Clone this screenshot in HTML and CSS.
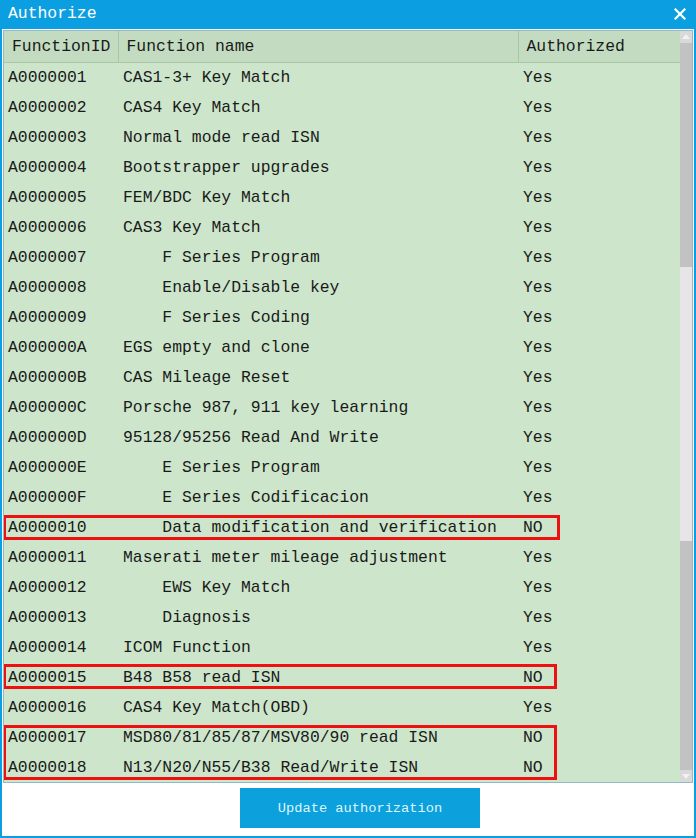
FILE: index.html
```html
<!DOCTYPE html>
<html lang="en">
<head>
  <meta charset="UTF-8" />
  <meta name="viewport" content="width=device-width, initial-scale=1.0"/>
  <title>Authorize</title>
  <link rel="stylesheet" href="styles.css">
</head>
<body>

  <div class="dialog">

    <!-- Title bar -->
    <div class="titlebar">
      <span class="title">Authorize</span>
      <svg class="close" width="12" height="12" viewBox="0 0 12 12">
        <path d="M1.5 1.5 L10.5 10.5 M10.5 1.5 L1.5 10.5" stroke="#fff" stroke-width="2.2" stroke-linecap="square"/>
      </svg>
    </div>

    <div class="content">

      <!-- Function list -->
      <div class="listbox">
        <div class="grid-wrap">
          <table class="func-table">
            <colgroup>
              <col class="col-id">
              <col class="col-name">
              <col class="col-auth">
            </colgroup>
            <thead>
              <tr>
                <th>FunctionID</th>
                <th>Function name</th>
                <th>Authorized</th>
              </tr>
            </thead>
            <tbody>
              <tr><td>A0000001</td><td>CAS1-3+ Key Match</td><td>Yes</td></tr>
              <tr><td>A0000002</td><td>CAS4 Key Match</td><td>Yes</td></tr>
              <tr><td>A0000003</td><td>Normal mode read ISN</td><td>Yes</td></tr>
              <tr><td>A0000004</td><td>Bootstrapper upgrades</td><td>Yes</td></tr>
              <tr><td>A0000005</td><td>FEM/BDC Key Match</td><td>Yes</td></tr>
              <tr><td>A0000006</td><td>CAS3 Key Match</td><td>Yes</td></tr>
              <tr><td>A0000007</td><td>    F Series Program</td><td>Yes</td></tr>
              <tr><td>A0000008</td><td>    Enable/Disable key</td><td>Yes</td></tr>
              <tr><td>A0000009</td><td>    F Series Coding</td><td>Yes</td></tr>
              <tr><td>A000000A</td><td>EGS empty and clone</td><td>Yes</td></tr>
              <tr><td>A000000B</td><td>CAS Mileage Reset</td><td>Yes</td></tr>
              <tr><td>A000000C</td><td>Porsche 987, 911 key learning</td><td>Yes</td></tr>
              <tr><td>A000000D</td><td>95128/95256 Read And Write</td><td>Yes</td></tr>
              <tr><td>A000000E</td><td>    E Series Program</td><td>Yes</td></tr>
              <tr><td>A000000F</td><td>    E Series Codificacion</td><td>Yes</td></tr>
              <tr><td>A0000010</td><td>    Data modification and verification</td><td>NO</td></tr>
              <tr><td>A0000011</td><td>Maserati meter mileage adjustment</td><td>Yes</td></tr>
              <tr><td>A0000012</td><td>    EWS Key Match</td><td>Yes</td></tr>
              <tr><td>A0000013</td><td>    Diagnosis</td><td>Yes</td></tr>
              <tr><td>A0000014</td><td>ICOM Function</td><td>Yes</td></tr>
              <tr><td>A0000015</td><td>B48 B58 read ISN</td><td>NO</td></tr>
              <tr><td>A0000016</td><td>CAS4 Key Match(OBD)</td><td>Yes</td></tr>
              <tr><td>A0000017</td><td>MSD80/81/85/87/MSV80/90 read ISN</td><td>NO</td></tr>
              <tr><td>A0000018</td><td>N13/N20/N55/B38 Read/Write ISN</td><td>NO</td></tr>
            </tbody>
          </table>

          <!-- red marks around the unauthorized functions -->
          <div class="mark mark-a"></div>
          <div class="mark mark-b"></div>
          <div class="mark mark-c"></div>
        </div>

        <!-- Scrollbar -->
        <div class="scrollbar">
          <div class="sb-arrow up"></div>
          <div class="sb-dark sb-top"></div>
          <div class="sb-light"></div>
          <div class="sb-dark sb-bottom"></div>
          <div class="sb-arrow down"></div>
        </div>
      </div>

      <!-- Actions -->
      <div class="actions">
        <button class="update-btn">Update authorization</button>
      </div>

    </div>
  </div>

</body>
</html>
```

FILE: styles.css
```css
/* Reset & Base */
* {
  box-sizing: border-box;
  margin: 0;
  padding: 0;
}

body {
  font-family: 'Liberation Mono', 'Courier New', monospace;
  background-color: #fff;
  color: #1a1a1a;
}

/* Dialog frame */
.dialog {
  width: 696px;
  height: 838px;
  display: flex;
  flex-direction: column;
  background-color: #0b9fe2;
}

.titlebar {
  height: 29px;
  display: flex;
  align-items: center;
  justify-content: space-between;
  padding: 0 10px 0 8px;
  color: #fff;
}

.titlebar .title {
  font-size: 16.4px;
  margin-top: -2px;
}

.titlebar .close {
  margin-top: -1px;
}

.content {
  flex: 1;
  margin: 0 2px 2px 2px;
  background-color: #fff;
  padding: 1px 1px 0 1px;
  display: flex;
  flex-direction: column;
}

/* List box */
.listbox {
  height: 753px;
  border: 1px solid #94b8cc;
  display: flex;
  background-color: #cde6cb;
}

.grid-wrap {
  position: relative;
  flex: 1;
  overflow: hidden;
}

.func-table {
  width: 677px;
  border-collapse: collapse;
  table-layout: fixed;
  font-size: 16.4px;
}

.col-id { width: 114px; }
.col-name { width: 400px; }
.col-auth { width: 163px; }

.func-table th {
  height: 31px;
  font-weight: normal;
  text-align: left;
  padding: 0 0 0 8px;
  background-color: #c3dcc1;
  border-right: 1px solid #a9c6a7;
  border-bottom: 1px solid #a9c6a7;
  white-space: nowrap;
}

.func-table th:last-child {
  border-right: none;
}

.func-table td {
  height: 30px;
  padding: 0 0 0 5px;
  white-space: pre;
  overflow: hidden;
}

.func-table td:first-child {
  padding-left: 4px;
}

/* Red highlight boxes */
.mark {
  position: absolute;
  left: -1px;
  border: 3px solid #ee1111;
}

.mark-a {
  top: 484px;
  width: 557px;
  height: 25px;
}

.mark-b {
  top: 633px;
  width: 554px;
  height: 25px;
}

.mark-c {
  top: 694px;
  width: 554px;
  height: 55px;
}

/* Scrollbar */
.scrollbar {
  width: 12px;
  display: flex;
  flex-direction: column;
  background-color: #e7e5e7;
}

.sb-arrow {
  height: 12px;
  background-color: #d9d9d9;
  position: relative;
}

.sb-arrow::after {
  content: "";
  position: absolute;
  left: 2px;
  border-left: 4px solid transparent;
  border-right: 4px solid transparent;
}

.sb-arrow.up::after {
  top: 3px;
  border-bottom: 5px solid #f2f2f2;
}

.sb-arrow.down::after {
  top: 4px;
  border-top: 5px solid #f2f2f2;
}

.sb-dark {
  background-color: #c2c2c2;
}

.sb-top {
  height: 224px;
}

.sb-light {
  height: 274px;
  background-color: #e7e5e7;
}

.sb-bottom {
  flex: 1;
}

/* Actions */
.actions {
  flex: 1;
  display: flex;
  justify-content: center;
  padding: 5px 0 0 24px;
}

.update-btn {
  width: 240px;
  height: 40px;
  border: none;
  background-color: #0ca1dc;
  color: #dff5ff;
  font-family: 'Liberation Mono', 'Courier New', monospace;
  font-size: 13.7px;
  cursor: pointer;
}

.update-btn:hover {
  background-color: #0a8fc4;
}
```
